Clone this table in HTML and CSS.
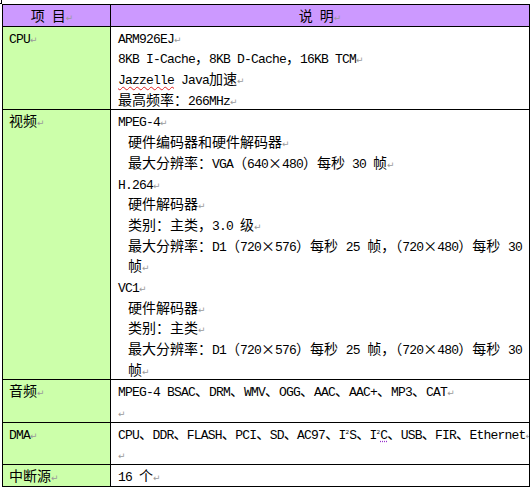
FILE: index.html
```html
<!DOCTYPE html>
<html lang="zh-CN">
<head>
<meta charset="utf-8">
<title>规格</title>
<link rel="stylesheet" href="styles.css">
</head>
<body>
<div class="wrap">
<table class="spec">
  <colgroup><col class="c1"><col class="c2"></colgroup>
  <thead>
    <tr>
      <th class="h1">项<span class="e"> </span>目<span class="p">↵</span></th>
      <th class="h2">说<span class="e"> </span>明<span class="p">↵</span></th>
    </tr>
  </thead>
  <tbody>
    <tr>
      <td class="k"><span class="e">CPU</span><span class="p">↵</span></td>
      <td class="v">
        <div class="ln"><span class="e">ARM926EJ</span><span class="p">↵</span></div>
        <div class="ln"><span class="e">8KB I-Cache</span>，<span class="e">8KB D-Cache</span>，<span class="e">16KB TCM</span><span class="p">↵</span></div>
        <div class="ln"><span class="e"><span class="sp">Jazzelle</span> Java</span>加速<span class="p">↵</span></div>
        <div class="ln">最高频率：<span class="e">266MHz</span><span class="p">↵</span></div>
      </td>
    </tr>
    <tr>
      <td class="k">视频<span class="p">↵</span></td>
      <td class="v">
        <div class="ln"><span class="e">MPEG-4</span><span class="p">↵</span></div>
        <div class="ln ind">硬件编码器和硬件解码器<span class="p">↵</span></div>
        <div class="ln ind">最大分辨率：<span class="e">VGA</span>（<span class="e">640</span>×<span class="e">480</span>）每秒<span class="e"> 30 </span>帧<span class="p">↵</span></div>
        <div class="ln"><span class="e">H.264</span><span class="p">↵</span></div>
        <div class="ln ind">硬件解码器<span class="p">↵</span></div>
        <div class="ln ind">类别：主类，<span class="e">3.0 </span>级<span class="p">↵</span></div>
        <div class="ln ind jl"><span>最大分辨率：<span class="e">D1</span>（<span class="e">720</span>×<span class="e">576</span>）每秒</span><span class="e">25</span><span>帧，（<span class="e">720</span>×<span class="e">480</span>）每秒</span><span class="e">30</span></div>
        <div class="ln ind">帧<span class="p">↵</span></div>
        <div class="ln"><span class="e">VC1</span><span class="p">↵</span></div>
        <div class="ln ind">硬件解码器<span class="p">↵</span></div>
        <div class="ln ind">类别：主类<span class="p">↵</span></div>
        <div class="ln ind jl"><span>最大分辨率：<span class="e">D1</span>（<span class="e">720</span>×<span class="e">576</span>）每秒</span><span class="e">25</span><span>帧，（<span class="e">720</span>×<span class="e">480</span>）每秒</span><span class="e">30</span></div>
        <div class="ln ind">帧<span class="p">↵</span></div>
      </td>
    </tr>
    <tr>
      <td class="k">音频<span class="p">↵</span></td>
      <td class="v">
        <div class="ln"><span class="e">MPEG-4 BSAC</span>、<span class="e">DRM</span>、<span class="e">WMV</span>、<span class="e">OGG</span>、<span class="e">AAC</span>、<span class="e">AAC+</span>、<span class="e">MP3</span>、<span class="e">CAT</span><span class="p">↵</span></div>
        <div class="ln"><span class="p">↵</span></div>
      </td>
    </tr>
    <tr>
      <td class="k"><span class="e">DMA</span><span class="p">↵</span></td>
      <td class="v">
        <div class="ln clip dma"><span class="e">CPU</span>、<span class="e">DDR</span>、<span class="e">FLASH</span>、<span class="e">PCI</span>、<span class="e">SD</span>、<span class="e">AC97</span>、<span class="e">I<sup>2</sup>S</span>、<span class="e">I<sup>2</sup><span class="gr">C</span></span>、<span class="e">USB</span>、<span class="e">FIR</span>、<span class="e">Ethernet</span><span class="p">↵</span></div>
        <div class="ln"><span class="p">↵</span></div>
      </td>
    </tr>
    <tr>
      <td class="k">中断源<span class="p">↵</span></td>
      <td class="v">
        <div class="ln"><span class="e">16 </span>个<span class="p">↵</span></div>
      </td>
    </tr>
  </tbody>
</table>
</div>
</body>
</html>
```
FILE: styles.css
```css
html, body {
  margin: 0;
  padding: 0;
  background: #ffffff;
}

body {
  padding: 4px 0 0 2px;
}

.wrap {
  position: relative;
  width: 528px;
}

.wrap::before {
  content: "";
  position: absolute;
  left: -2px;
  top: -4px;
  width: 2px;
  height: 4px;
  border-right: 1px solid #000;
  border-bottom: 1px solid #000;
  box-sizing: border-box;
}

.spec {
  border-collapse: collapse;
  table-layout: fixed;
  width: 528px;
  font-family: "Noto Sans CJK SC", "Noto Sans CJK TC", sans-serif;
  font-size: 14px;
  line-height: 20.7px;
  color: #000;
}

.c1 { width: 108px; }

.spec th,
.spec td {
  border: 1px solid #000;
  padding: 0 7px;
  vertical-align: top;
  font-weight: normal;
}

.spec th {
  background: #cc99ff;
  text-align: center;
  white-space: pre;
}

.spec .h1 { padding-right: 16px; }

.spec td.k {
  background: #ccffaa;
  padding-left: 6px;
  white-space: nowrap;
}

.ln {
  white-space: nowrap;
  height: 20.7px;
}

.ind { padding-left: 10px; }

.jl {
  display: flex;
  justify-content: space-between;
  align-items: baseline;
}

.jl > span {
  line-height: 20.7px;
}

.clip {
  overflow: hidden;
  margin-right: -7px;
}

.dma { letter-spacing: -0.6px; }

.e {
  font-family: "Liberation Mono", monospace;
  font-size: 13px;
  letter-spacing: -0.8px;
  line-height: 0;
}

.e sup {
  font-size: 6px;
  letter-spacing: 0;
  vertical-align: 5px;
  line-height: 0;
}

.p {
  font-family: "DejaVu Sans", sans-serif;
  font-size: 9px;
  color: #9a9a9a;
  line-height: 0;
  letter-spacing: 0;
}

.sp {
  text-decoration: underline wavy #e02020;
  text-decoration-thickness: 1px;
  text-underline-offset: 2px;
}

.gr {
  text-decoration: underline dotted #9933cc;
  text-underline-offset: 2px;
}
```
